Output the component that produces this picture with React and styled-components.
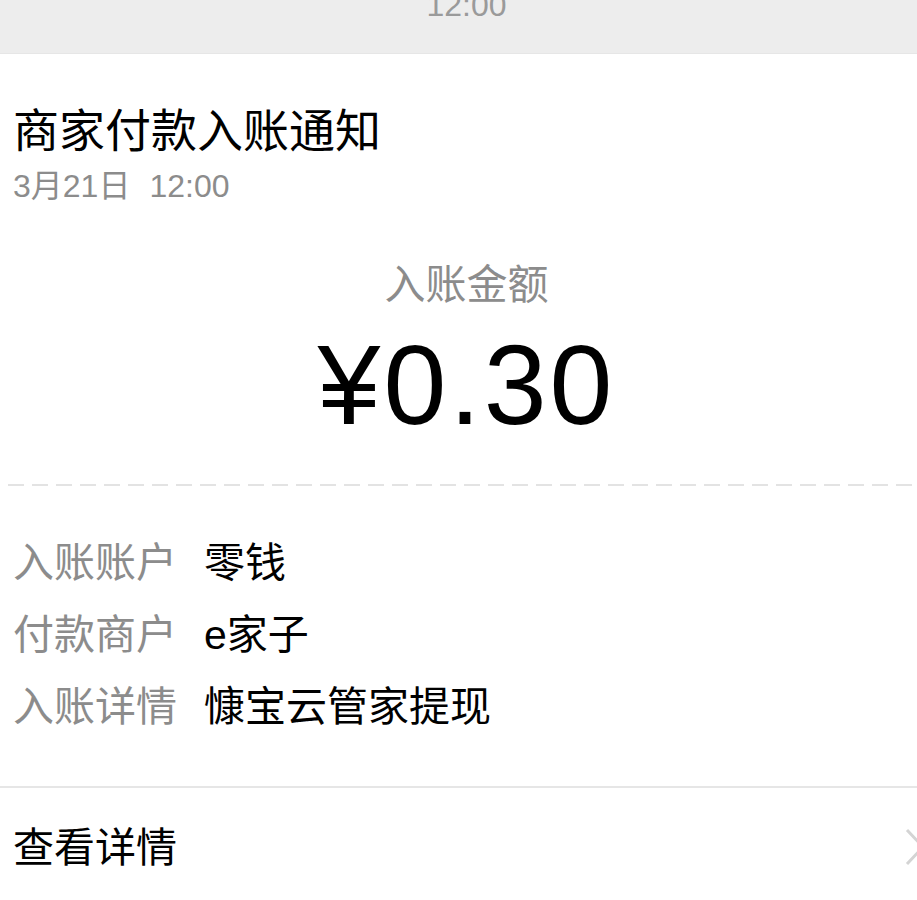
import React from 'react'
import styled, { createGlobalStyle } from 'styled-components'

const GlobalStyle = createGlobalStyle`
    html, body {
        margin: 0;
        padding: 0;
        background: #ffffff;
        overflow-x: hidden;
    }
    body {
        font-family: "Liberation Sans", "Noto Sans CJK SC", sans-serif;
        color: #000;
    }
`

const details = [
    { label: '入账账户', value: '零钱' },
    { label: '付款商户', value: 'e家子' },
    { label: '入账详情', value: '慷宝云管家提现' },
]

export default function App() {
    return (
        <Page>
            <GlobalStyle />
            <TopBar>
                <Time>12:00</Time>
            </TopBar>
            <Card>
                <Title>商家付款入账通知</Title>
                <DateLine>3月21日<DateTime>12:00</DateTime></DateLine>
                <AmountLabel>入账金额</AmountLabel>
                <Amount>¥0.30</Amount>
                <Dashed />
                <DetailList>
                    {details.map((d) => (
                        <DetailRow key={d.label}>
                            <DetailLabel>{d.label}</DetailLabel>
                            <DetailValue>{d.value}</DetailValue>
                        </DetailRow>
                    ))}
                </DetailList>
                <Divider />
                <Footer>
                    <FooterText>查看详情</FooterText>
                    <Chevron viewBox="0 0 24 40" width="24" height="40">
                        <polyline points="4,3 20,20 4,37" fill="none" stroke="#d4d4d4" strokeWidth="3" />
                    </Chevron>
                </Footer>
            </Card>
        </Page>
    )
}

const Page = styled.div`
    width: 917px;
    min-height: 900px;
    overflow: hidden;
`

const TopBar = styled.div`
    height: 53px;
    background: #ededed;
    display: flex;
    justify-content: center;
    padding-left: 16px;
    overflow: hidden;
`

const Time = styled.div`
    font-size: 32px;
    line-height: 30px;
    margin-top: -10px;
    color: #9a9a9a;
`

const Card = styled.div`
    background: #fff;
    border-top: 1px solid #e6e6e6;
`

const Title = styled.div`
    padding-left: 13px;
    margin-top: 49px;
    height: 56px;
    line-height: 56px;
    font-size: 46px;
    color: #000;
`

const DateLine = styled.div`
    padding-left: 13px;
    margin-top: 7px;
    line-height: 40px;
    font-size: 32px;
    color: #8c8c8c;
`

const DateTime = styled.span`
    margin-left: 19px;
`

const Centered = styled.div`
    text-align: center;
    padding-left: 16px;
`

const AmountLabel = styled(Centered)`
    margin-top: 54px;
    line-height: 50px;
    font-size: 41px;
    color: #8c8c8c;
`

const Amount = styled(Centered)`
    margin-top: 15px;
    line-height: 120px;
    font-size: 113px;
    letter-spacing: 3px;
    color: #000;
`

const Dashed = styled.div`
    margin: 39px 0 0 8px;
    height: 2px;
    background: repeating-linear-gradient(90deg, #e3e3e3 0 16px, transparent 16px 24px);
`

const DetailList = styled.div`
    padding: 41px 0 0 13px;
`

const DetailRow = styled.div`
    display: grid;
    grid-template-columns: 191px auto;
    height: 72px;
    line-height: 72px;
    font-size: 41px;
`

const DetailLabel = styled.div`
    color: #8c8c8c;
`

const DetailValue = styled.div`
    color: #000;
`

const Divider = styled.div`
    margin-top: 43px;
    height: 2px;
    background: #e6e6e6;
`

const Footer = styled.div`
    display: flex;
    align-items: center;
    justify-content: space-between;
    height: 120px;
    padding-left: 13px;
    margin-right: -10px;
`

const FooterText = styled.div`
    font-size: 41px;
    line-height: 120px;
    color: #000;
`

const Chevron = styled.svg`
    flex: none;
    margin-top: -2px;
`
